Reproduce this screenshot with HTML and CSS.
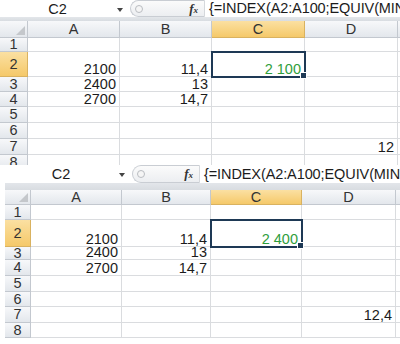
FILE: index.html
```html
<!DOCTYPE html>
<html lang="fr">
<head>
    <meta charset="UTF-8">
    <meta name="viewport" content="width=device-width, initial-scale=1.0">
    <title>INDEX / EQUIV</title>
    <link rel="stylesheet" href="styles.css">
</head>
<body>
    <div class="sheet sheet-top">
        <div class="bar">
            <div class="namebox"><span class="name">C2</span><span class="arrow"></span></div>
            <div class="pill"><span class="grip"></span><span class="fx">f<i>x</i></span></div>
            <div class="formula">{=INDEX(A2:A100;EQUIV(MIN(B2:B100);B2:B100;0))}</div>
        </div>
        <div class="band"></div>
        <div id="grid1" class="grid"></div>
    </div>

    <div class="sheet sheet-bottom">
        <div class="bar">
            <div class="namebox"><span class="name">C2</span><span class="arrow"></span></div>
            <div class="pill"><span class="grip"></span><span class="fx">f<i>x</i></span></div>
            <div class="formula">{=INDEX(A2:A100;EQUIV(MIN(B2:B100);B2:B100;0))}</div>
        </div>
        <div class="band"></div>
        <div id="grid2" class="grid"></div>
    </div>

    <script>
        const columns = ["A", "B", "C", "D", "E"];
        const sheets = [
            { id: "grid1", data: { A2: "2100", B2: "11,4", C2: "2 100", A3: "2400", B3: "13", A4: "2700", B4: "14,7", D7: "12" } },
            { id: "grid2", data: { A2: "2100", B2: "11,4", C2: "2 400", A3: "2400", B3: "13", A4: "2700", B4: "14,7", D7: "12,4" } }
        ];

        function buildGrid(sheet) {
            const grid = document.getElementById(sheet.id);
            let corner = document.createElement("div");
            corner.className = "hdr corner";
            grid.appendChild(corner);
            columns.forEach(col => {
                let h = document.createElement("div");
                h.className = "hdr col-hdr";
                if (col === "C") h.classList.add("active");
                h.innerText = col;
                grid.appendChild(h);
            });
            for (let row = 1; row <= 8; row++) {
                let rh = document.createElement("div");
                rh.className = "hdr row-hdr";
                if (row === 2) rh.classList.add("active");
                rh.innerText = row;
                grid.appendChild(rh);
                columns.forEach(col => {
                    let cell = document.createElement("div");
                    cell.className = "cell";
                    let ref = col + row;
                    if (sheet.data[ref]) cell.innerText = sheet.data[ref];
                    if (ref === "C2") {
                        cell.classList.add("selected");
                        let handle = document.createElement("span");
                        handle.className = "handle";
                        cell.appendChild(handle);
                    }
                    grid.appendChild(cell);
                });
            }
        }

        sheets.forEach(buildGrid);
    </script>
</body>
</html>
```

FILE: styles.css
```css
body { margin: 0; width: 400px; height: 344px; overflow: hidden; background-color: #fff; font-family: "Liberation Sans", Arial, sans-serif; color: #1c1c1c; }
.sheet { overflow: hidden; }
.sheet-top { height: 165px; --name-w: 130px; --pill-w: 75px; --bar-h: 17px; --band-h: 4px; }
.sheet-bottom { height: 179px; padding-left: 5px; --name-w: 127px; --pill-w: 68px; --bar-h: 18px; --band-h: 7px; }

.bar { display: flex; height: var(--bar-h); background-color: #fff; font-size: 14.5px; }
.namebox { width: var(--name-w); display: flex; align-items: center; }
.name { flex: 1; text-align: center; padding-left: 2px; }
.arrow { width: 0; height: 0; margin: 2px 7px 0 4px; border-left: 3px solid transparent; border-right: 3px solid transparent; border-top: 4px solid #444; }
.pill { width: var(--pill-w); display: flex; align-items: center; justify-content: space-between; box-sizing: border-box; border: 1px solid #c9cdd3; border-right-color: #d5d8dc; border-radius: 9px 0 0 9px; background: linear-gradient(#fbfbfb, #eceef1); padding: 0 6px 0 4px; }
.grip { width: 6px; height: 6px; border: 1px solid #b9bcc1; border-radius: 50%; background-color: #f5f5f5; }
.fx { font-family: "Liberation Serif", serif; font-style: italic; font-weight: bold; font-size: 13px; color: #333; }
.fx i { font-size: 9px; }
.formula { flex: 1; padding-left: 4px; white-space: nowrap; overflow: hidden; line-height: var(--bar-h); letter-spacing: -0.1px; }
.band { height: var(--band-h); background: linear-gradient(#e3e6ea, #d8dce1); }

.grid { display: grid; font-size: 14.5px; }
.sheet-top .grid { grid-template-columns: 28px 92px 92px 93px 93px 60px; grid-template-rows: 17px 14px 25px 15px 15px 16px 16px 16px 16px; }
.sheet-bottom .grid { grid-template-columns: 26px 91px 89px 91px 94px 60px; grid-template-rows: 15px 15px 27px 13px 16px 16px 15px 16px 15px; }

.hdr { display: flex; align-items: center; justify-content: center; box-sizing: border-box; background: linear-gradient(#f7f8fa, #e3e7ec); border-right: 1px solid #c3c8cf; border-bottom: 1px solid #c3c8cf; color: #333; line-height: 13px; }
.hdr.active { background: linear-gradient(#fbe0a2, #f5c96a); border-color: #d9b260; }
.corner { align-items: flex-end; justify-content: flex-end; padding: 0 2px 2px 0; }
.corner::after { content: ""; width: 0; height: 0; border-left: 9px solid transparent; border-bottom: 9px solid #c4c7cb; }

.cell { position: relative; display: flex; align-items: flex-end; justify-content: flex-end; box-sizing: border-box; border-right: 1px solid #dadcdf; border-bottom: 1px solid #dadcdf; padding: 0 3px 1px 0; line-height: 12px; white-space: nowrap; }
.cell.selected { color: #2f9e3c; outline: 2px solid #1e3955; outline-offset: -1px; z-index: 1; }
.handle { position: absolute; right: -3px; bottom: -3px; width: 5px; height: 5px; background-color: #1e3955; border: 1px solid #fff; }
```
